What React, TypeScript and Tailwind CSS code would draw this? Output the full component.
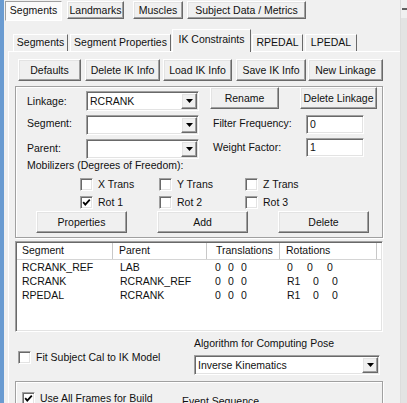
import React from "react";

const raised =
  "border border-t-white border-l-white border-r-[#696969] border-b-[#696969] shadow-[inset_-1px_-1px_0_#a0a0a0,inset_1px_1px_0_#e3e3e3] bg-[#f0f0f0]";
const sunken =
  "border border-t-[#a0a0a0] border-l-[#a0a0a0] border-r-white border-b-white shadow-[inset_1px_1px_0_#696969,inset_-1px_-1px_0_#e3e3e3] bg-white";
const etched = "border border-[#a0a0a0] shadow-[1px_1px_0_white,inset_1px_1px_0_white]";

function Btn({ label, className = "" }: { label: string; className?: string }) {
  return (
    <div className={`${raised} flex items-center justify-center shrink-0 leading-none whitespace-nowrap ${className}`}>
      {label}
    </div>
  );
}

function Arrow() {
  return (
    <svg width="7" height="4" viewBox="0 0 7 4">
      <polygon points="0,0 7,0 3.5,4" fill="#000" />
    </svg>
  );
}

function Combo({ value = "", className = "" }: { value?: string; className?: string }) {
  return (
    <div className={`${sunken} flex items-stretch shrink-0 p-[1px] ${className}`}>
      <div className="flex-1 flex items-center pl-[2px] leading-none">{value}</div>
      <div className={`${raised} w-[16px] flex items-center justify-center`}>
        <Arrow />
      </div>
    </div>
  );
}

function Field({ value, className = "" }: { value: string; className?: string }) {
  return (
    <div className={`${sunken} flex items-center pl-[3px] shrink-0 leading-none ${className}`}>
      {value}
    </div>
  );
}

function Check({ checked = false }: { checked?: boolean }) {
  return (
    <div className={`${sunken} w-[13px] h-[13px] shrink-0 flex items-center justify-center`}>
      {checked && (
        <svg width="9" height="9" viewBox="0 0 9 9">
          <path d="M1.2 4.2 L3.3 6.6 L7.8 1.6" stroke="#000" strokeWidth="1.8" fill="none" />
        </svg>
      )}
    </div>
  );
}

const rows = [
  { seg: "RCRANK_REF", parent: "LAB", rot: ["0", "0", "0"] },
  { seg: "RCRANK", parent: "RCRANK_REF", rot: ["R1", "0", "0"] },
  { seg: "RPEDAL", parent: "RCRANK", rot: ["R1", "0", "0"] },
];

export default function App() {
  return (
    <div className="w-[407px] h-[403px] overflow-hidden flex bg-[#f0f0f0] text-[#111] text-[10.5px] font-['Liberation_Sans',Arial,sans-serif]">
      <div className="w-[4px] shrink-0 bg-[#6a9bd1]" />

      <div className="w-[396px] shrink-0 flex flex-col">
        {/* outer tabs */}
        <div className="h-[22px] shrink-0 flex items-start pt-[1px]">
          <div className="ml-[1px] w-[57px] h-[20px] flex items-center justify-center border border-t-[#a0a0a0] border-l-[#a0a0a0] border-r-white border-b-white bg-[#fafafa]">
            Segments
          </div>
          <Btn label="Landmarks" className="ml-[5px] w-[57px] h-[18px]" />
          <Btn label="Muscles" className="ml-[9px] w-[50px] h-[18px]" />
          <Btn label="Subject Data / Metrics" className="ml-[4px] w-[119px] h-[18px]" />
        </div>

        {/* inner tabs */}
        <div className="mt-[8px] h-[22px] shrink-0 flex items-end -mb-px relative z-10">
          <div className="ml-[9px] mb-px w-[55px] h-[17px] flex items-center justify-center border-t border-l border-white border-r border-r-[#696969]">
            Segments
          </div>
          <div className="ml-[2px] mb-px w-[101px] h-[17px] flex items-center justify-center border-t border-l border-white border-r border-r-[#696969]">
            Segment Properties
          </div>
          <div className="ml-[1px] w-[79px] h-[23px] pb-[2px] flex items-center justify-center bg-[#f0f0f0] border-t border-l border-white border-r border-r-[#696969]">
            IK Constraints
          </div>
          <div className="ml-[1px] mb-px w-[51px] h-[17px] flex items-center justify-center border-t border-l border-white border-r border-r-[#696969]">
            RPEDAL
          </div>
          <div className="ml-[2px] mb-px w-[52px] h-[17px] flex items-center justify-center border-t border-l border-white border-r border-r-[#696969]">
            LPEDAL
          </div>
        </div>

        {/* panel */}
        <div className="ml-[4px] flex-1 border-t border-l border-white pl-[6px] flex flex-col">
          <div className="mt-[7px] flex h-[22px] shrink-0">
            <Btn label="Defaults" className="ml-[3px] w-[63px] h-[22px]" />
            <Btn label="Delete IK Info" className="ml-[4px] w-[75px] h-[22px]" />
            <Btn label="Load IK Info" className="ml-[3px] w-[69px] h-[22px]" />
            <Btn label="Save IK Info" className="ml-[4px] w-[70px] h-[22px]" />
            <Btn label="New Linkage" className="ml-[2px] w-[75px] h-[22px]" />
          </div>

          {/* group box */}
          <div className={`${etched} mt-[5px] w-[368px] h-[152px] shrink-0 flex flex-col`}>
            <div className="flex items-start h-[24px] shrink-0">
              <span className="ml-[11px] w-[59px] mt-[8px] leading-[13px]">Linkage:</span>
              <Combo value="RCRANK" className="w-[113px] h-[20px] mt-[4px]" />
              <Btn label="Rename" className="ml-[11px] w-[69px] h-[22px]" />
              <Btn label="Delete Linkage" className="ml-[21px] w-[77px] h-[22px]" />
            </div>
            <div className="flex items-start h-[24px] shrink-0">
              <span className="ml-[11px] w-[59px] mt-[6px] leading-[13px]">Segment:</span>
              <Combo className="w-[113px] h-[20px] mt-[4px]" />
              <span className="ml-[14px] w-[93px] mt-[6px] leading-[13px]">Filter Frequency:</span>
              <Field value="0" className="w-[58px] h-[19px] mt-[4px]" />
            </div>
            <div className="flex items-start h-[24px] shrink-0">
              <span className="ml-[11px] w-[59px] mt-[7px] leading-[13px]">Parent:</span>
              <Combo className="w-[113px] h-[20px] mt-[4px]" />
              <span className="ml-[14px] w-[93px] mt-[6px] leading-[13px]">Weight Factor:</span>
              <Field value="1" className="w-[58px] h-[19px] mt-[3px]" />
            </div>
            <div className="ml-[11px] leading-[13px] h-[13px] shrink-0">Mobilizers (Degrees of Freedom):</div>
            <div className="mt-[6px] flex h-[13px] shrink-0">
              <div className="ml-[64px] w-[79px] flex items-center">
                <Check />
                <span className="ml-[5px]">X Trans</span>
              </div>
              <div className="w-[86px] flex items-center">
                <Check />
                <span className="ml-[5px]">Y Trans</span>
              </div>
              <div className="flex items-center">
                <Check />
                <span className="ml-[5px]">Z Trans</span>
              </div>
            </div>
            <div className="mt-[5px] flex h-[13px] shrink-0">
              <div className="ml-[64px] w-[79px] flex items-center">
                <Check checked />
                <span className="ml-[5px]">Rot 1</span>
              </div>
              <div className="w-[86px] flex items-center">
                <Check />
                <span className="ml-[5px]">Rot 2</span>
              </div>
              <div className="flex items-center">
                <Check />
                <span className="ml-[5px]">Rot 3</span>
              </div>
            </div>
            <div className="mt-[2px] flex h-[22px] shrink-0">
              <Btn label="Properties" className="ml-[20px] w-[91px] h-[22px]" />
              <Btn label="Add" className="ml-[30px] w-[91px] h-[22px]" />
              <Btn label="Delete" className="ml-[30px] w-[91px] h-[22px]" />
            </div>
          </div>

          {/* list view */}
          <div className={`${sunken} mt-[3px] w-[368px] h-[91px] shrink-0 p-[1px] flex flex-col`}>
            <div className="h-[17px] shrink-0 flex border-b border-[#d5d5d5] bg-white">
              <div className="w-[96px] pl-[5px] flex items-center border-r border-[#c8c8c8]">Segment</div>
              <div className="w-[94px] pl-[6px] flex items-center border-r border-[#c8c8c8]">Parent</div>
              <div className="w-[73px] pl-[9px] flex items-center border-r border-[#c8c8c8]">Translations</div>
              <div className="w-[97px] pl-[6px] flex items-center border-r border-[#c8c8c8]">Rotations</div>
              <div className="flex-1" />
            </div>
            <div className="pt-[1px] flex flex-col">
              {rows.map((r) => (
                <div key={r.seg} className="h-[14px] flex items-center">
                  <div className="w-[96px] pl-[5px]">{r.seg}</div>
                  <div className="w-[94px] pl-[7px]">{r.parent}</div>
                  <div className="w-[73px] pl-[8px] flex">
                    <span className="w-[13px]">0</span>
                    <span className="w-[13px]">0</span>
                    <span className="w-[13px]">0</span>
                  </div>
                  <div className="w-[97px] pl-[7px] flex">
                    {r.rot[0] === "R1" ? (
                      <>
                        <span className="w-[26px]">R1</span>
                        <span className="w-[19px]">0</span>
                        <span className="w-[19px]">0</span>
                      </>
                    ) : (
                      <>
                        <span className="w-[20px]">0</span>
                        <span className="w-[20px]">0</span>
                        <span className="w-[20px]">0</span>
                      </>
                    )}
                  </div>
                </div>
              ))}
            </div>
          </div>

          {/* fit + algorithm */}
          <div className="h-[49px] shrink-0 flex">
            <div className="w-[179px] pl-[3px] pt-[19px] flex items-start">
              <Check />
              <span className="ml-[5px] leading-[13px]">Fit Subject Cal to IK Model</span>
            </div>
            <div className="flex flex-col">
              <span className="mt-[5px] leading-[13px]">Algorithm for Computing Pose</span>
              <Combo value="Inverse Kinematics" className="mt-[5px] w-[186px] h-[20px]" />
            </div>
          </div>

          <div className={`${etched} w-[368px] h-[40px] shrink-0 flex items-start`}>
            <div className="ml-[6px] mt-[10px] flex items-center">
              <Check checked />
              <span className="ml-[5px] w-[142px] leading-[13px]">Use All Frames for Build</span>
            </div>
            <span className="mt-[13px] leading-[13px]">Event Sequence</span>
          </div>
        </div>
      </div>

      <div className="w-[1px] shrink-0 bg-[#dcdcdc]" />
      <div className="w-[6px] shrink-0 flex flex-col">
        <div className="h-[18px] shrink-0 flex items-center justify-end">
          <div className="w-[5px] h-[2px] bg-[#606060]" />
        </div>
        <div className="flex-1 bg-[#e3e3e3]" />
      </div>
    </div>
  );
}
